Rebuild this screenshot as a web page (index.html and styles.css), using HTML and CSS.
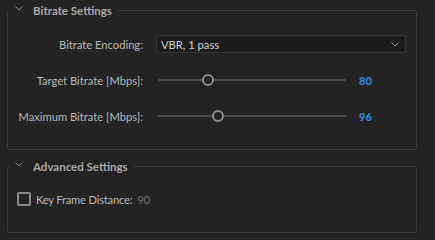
FILE: index.html
```html
<!DOCTYPE html>
<html>
<head>
<meta charset="utf-8">
<link rel="stylesheet" href="styles.css">
</head>
<body>
<div class="panel">
  <fieldset class="group group-bitrate">
    <legend class="group-title">
      <svg class="chev" width="8" height="5" viewBox="0 0 8 5"><path d="M0.5 0.5 L4 4 L7.5 0.5" fill="none" stroke="#8c8c8c" stroke-width="1"/></svg>
      <span>Bitrate Settings</span>
    </legend>
    <div class="rows">
      <div class="row">
        <label class="lbl">Bitrate Encoding:</label>
        <div class="select">
          <span>VBR, 1 pass</span>
          <svg width="8" height="5" viewBox="0 0 8 5"><path d="M0.5 0.5 L4 4 L7.5 0.5" fill="none" stroke="#9a9a9a" stroke-width="1"/></svg>
        </div>
      </div>
      <div class="row">
        <label class="lbl">Target Bitrate [Mbps]:</label>
        <div class="slider"><div class="track"></div><div class="knob" style="left: 26.6%"></div></div>
        <span class="val">80</span>
      </div>
      <div class="row">
        <label class="lbl">Maximum Bitrate [Mbps]:</label>
        <div class="slider"><div class="track"></div><div class="knob" style="left: 32%"></div></div>
        <span class="val">96</span>
      </div>
    </div>
  </fieldset>
  <fieldset class="group group-adv">
    <legend class="group-title">
      <svg class="chev" width="8" height="5" viewBox="0 0 8 5"><path d="M0.5 0.5 L4 4 L7.5 0.5" fill="none" stroke="#8c8c8c" stroke-width="1"/></svg>
      <span>Advanced Settings</span>
    </legend>
    <div class="check-row">
      <span class="box"></span>
      <span class="check-lbl">Key Frame Distance:</span>
      <span class="dim">90</span>
    </div>
  </fieldset>
</div>
</body>
</html>
```
FILE: styles.css
```css
html, body {
  margin: 0;
  padding: 0;
  background: #232323;
}
body {
  font-family: Lato, "Open Sans", sans-serif;
  font-size: 11.2px;
  color: #b8b8b8;
  width: 435px;
  height: 240px;
  overflow: hidden;
}
.panel {
  padding-left: 7px;
  display: flex;
  flex-direction: column;
}
.group {
  box-sizing: border-box;
  width: 410px;
  margin: 0;
  border: 1px solid #3a3a3a;
  border-radius: 2px;
  padding: 0;
}
.group-adv {
  margin-top: 6px;
}
.group-title {
  height: 20px;
  padding: 0 6px 0 6px;
  margin-left: 1px;
  display: flex;
  align-items: center;
  gap: 10px;
  font-size: 11.5px;
  font-weight: bold;
  color: #a8a8a8;
}
.chev {
  display: block;
  margin-top: -3px;
}
.rows {
  display: flex;
  flex-direction: column;
  gap: 18px;
  padding: 15px 0 24px 0;
}
.row {
  display: flex;
  align-items: center;
  height: 18px;
}
.lbl {
  width: 135px;
  text-align: right;
  margin-right: 13px;
  white-space: nowrap;
}
.select {
  box-sizing: border-box;
  width: 250px;
  height: 18px;
  background: #1c1c1c;
  border: 1px solid #363636;
  border-radius: 3px;
  display: flex;
  align-items: center;
  justify-content: space-between;
  padding: 0 6px 0 4px;
  color: #d0d0d0;
}
.slider {
  position: relative;
  width: 188px;
  height: 12px;
  margin-left: 2px;
}
.track {
  position: absolute;
  left: 0;
  right: 0;
  top: 5px;
  height: 2px;
  background: #4a4a4a;
}
.knob {
  position: absolute;
  top: 0;
  width: 12px;
  height: 12px;
  margin-left: -6px;
  box-sizing: border-box;
  border: 2px solid #8e8e8e;
  border-radius: 50%;
  background: #232323;
}
.val {
  margin-left: 13px;
  color: #2f8fe8;
  font-weight: bold;
}
.check-row {
  display: flex;
  align-items: center;
  height: 14px;
  padding: 16px 0 26px 9px;
}
.box {
  box-sizing: border-box;
  width: 14px;
  height: 14px;
  border: 2px solid #8a8a8a;
  border-radius: 2px;
  margin-right: 5px;
}
.check-lbl {
  margin-right: 5px;
  letter-spacing: -0.2px;
}
.dim {
  color: #6e6e6e;
}
```
